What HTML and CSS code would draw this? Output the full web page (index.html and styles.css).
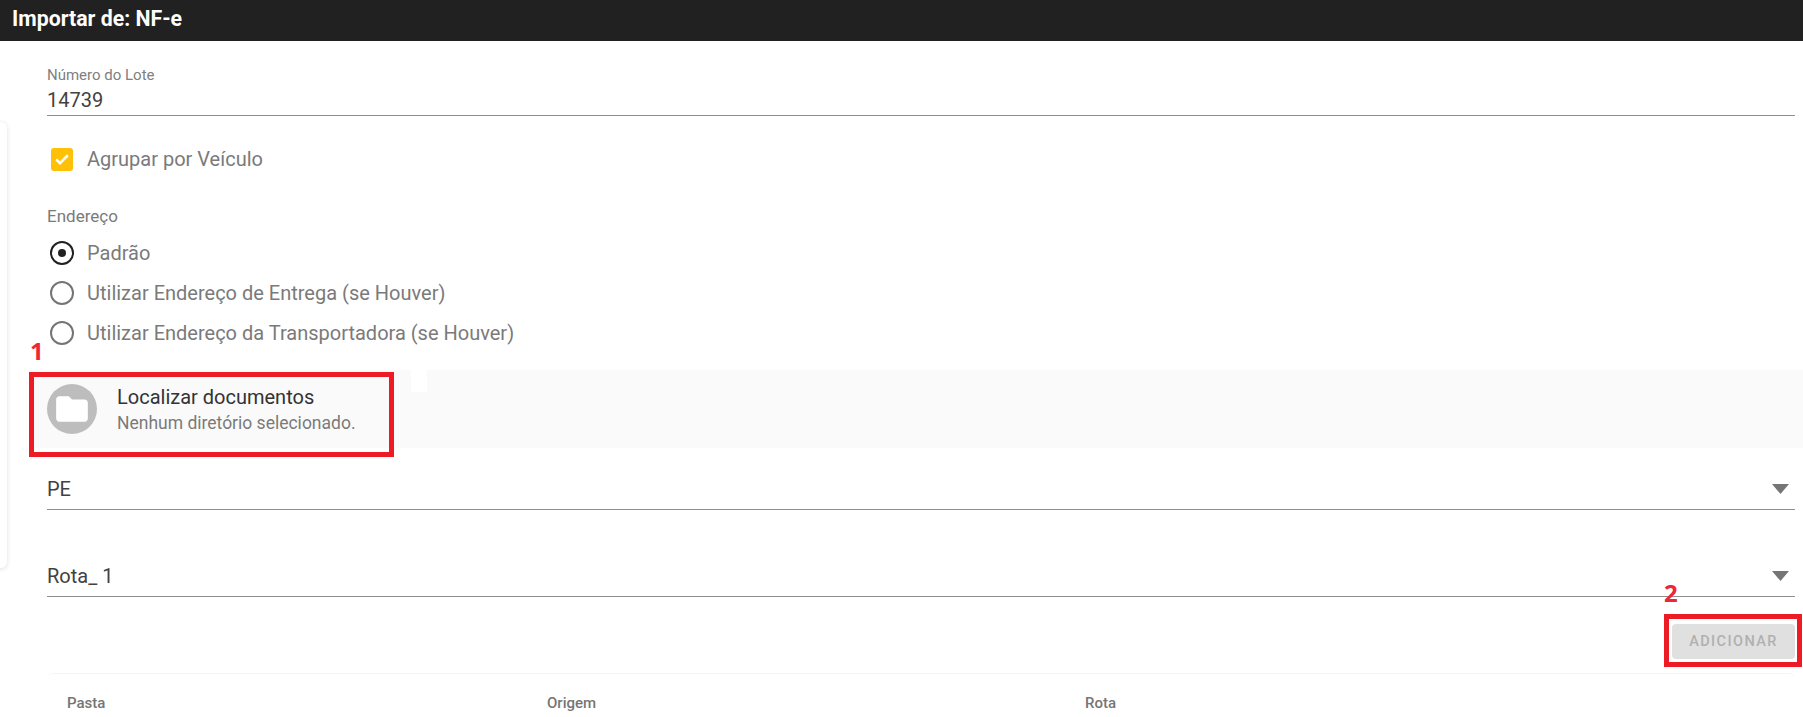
FILE: index.html
```html
<!DOCTYPE html>
<html lang="pt-BR">
<head>
<meta charset="utf-8">
<title>Importar de: NF-e</title>
<link rel="stylesheet" href="styles.css">
</head>
<body>
<header class="topbar">Importar de: NF-e</header>
<div class="side-card"></div>
<main class="content">
  <div class="field lote">
    <label class="field-label">Número do Lote</label>
    <div class="field-value">14739</div>
  </div>
  <div class="check-row">
    <span class="checkbox">
      <svg viewBox="0 0 24 24" width="20" height="20"><path d="M5 12.500l4.600 4.500L19 7.500" fill="none" stroke="#fff" stroke-width="3"/></svg>
    </span>
    <span class="option-text">Agrupar por Veículo</span>
  </div>
  <div class="group-label">Endereço</div>
  <div class="radio-group">
    <div class="radio-row"><span class="radio selected"></span><span class="option-text">Padrão</span></div>
    <div class="radio-row"><span class="radio"></span><span class="option-text">Utilizar Endereço de Entrega (se Houver)</span></div>
    <div class="radio-row"><span class="radio"></span><span class="option-text">Utilizar Endereço da Transportadora (se Houver)</span></div>
  </div>
  <section class="locate">
    <span class="folder-circle">
      <svg viewBox="0 0 24 24" width="38" height="38"><path d="M10 4H4c-1.100 0-2 .9-2 2v12c0 1.100.9 2 2 2h16c1.100 0 2-.9 2-2V8c0-1.100-.9-2-2-2h-8l-2-2z" fill="#fff"/></svg>
    </span>
    <div class="locate-text">
      <div class="locate-title">Localizar documentos</div>
      <div class="locate-sub">Nenhum diretório selecionado.</div>
    </div>
    <span class="notch"></span>
  </section>
  <div class="select first">
    <span>PE</span>
    <svg class="arrow" viewBox="0 0 17 10" width="17" height="10"><path d="M0 0h17L8.500 10z" fill="#757575"/></svg>
  </div>
  <div class="select second">
    <span>Rota_ 1</span>
    <svg class="arrow" viewBox="0 0 17 10" width="17" height="10"><path d="M0 0h17L8.500 10z" fill="#757575"/></svg>
  </div>
  <div class="actions"><button class="add-btn" disabled>ADICIONAR</button></div>
  <div class="table-card">
    <div class="col col-pasta">Pasta</div>
    <div class="col col-origem">Origem</div>
    <div class="col col-rota">Rota</div>
  </div>
</main>
<div class="mark mark-one">1</div>
<div class="frame frame-one"></div>
<div class="mark mark-two">2</div>
<div class="frame frame-two"></div>
</body>
</html>
```

FILE: styles.css
```css
* { box-sizing: border-box; }
html, body { margin: 0; height: 717px; overflow: hidden; background: #fff; }
body { position: relative; font-family: Roboto, "Liberation Sans", sans-serif; color: #212121; }

.topbar { height: 41px; background: #212121; color: #fff; font-size: 21.300px; font-weight: 700; line-height: 38px; padding-left: 12px; }

.side-card { position: absolute; left: -10px; top: 122px; width: 17px; height: 446px; background: #fff; border-radius: 6px; box-shadow: 0 1px 5px rgba(0,0,0,.13); }

.content { padding-left: 29px; display: flex; flex-direction: column; }

.field { margin: 0 8px 0 18px; }
.lote { height: 75px; padding-top: 25px; border-bottom: 1px solid #8e8e8e; }
.field-label { display: block; font-size: 15px; line-height: 18px; color: #808080; }
.field-value { font-size: 20px; line-height: 24px; color: #424242; margin-top: 4px; }

.check-row { display: flex; align-items: center; height: 24px; margin: 31px 0 0 22px; }
.checkbox { width: 22px; height: 23px; border-radius: 3px; background: #ffc107; display: flex; align-items: center; justify-content: center; margin-right: 14px; }
.option-text { font-size: 20px; color: #7a7a7a; line-height: 24px; }

.group-label { margin: 34px 0 0 18px; font-size: 17px; line-height: 22px; color: #7a7a7a; }

.radio-group { margin: 14px 0 0 21px; display: flex; flex-direction: column; gap: 16px; }
.radio-row { display: flex; align-items: center; height: 24px; }
.radio { width: 24px; height: 24px; border-radius: 50%; border: 2px solid #757575; margin-right: 13px; position: relative; flex: none; }
.radio.selected { border-color: #212121; }
.radio.selected::after { content: ""; position: absolute; inset: 6px; border-radius: 50%; background: #212121; }

.locate { position: relative; margin-top: 25px; height: 78px; background: #fafafa; display: flex; align-items: center; padding-left: 18px; }
.folder-circle { width: 50px; height: 50px; border-radius: 50%; background: #bdbdbd; display: flex; align-items: center; justify-content: center; margin-right: 20px; flex: none; }
.locate-text { margin-top: 2px; }
.locate-title { font-size: 20px; line-height: 26px; color: #333; }
.locate-sub { font-size: 17.500px; line-height: 26px; color: #7a7a7a; }
.notch { position: absolute; left: 382px; top: 0; width: 16px; height: 22px; background: #fff; }

.select { display: flex; align-items: center; justify-content: space-between; margin: 0 8px 0 18px; border-bottom: 1px solid #8e8e8e; font-size: 20px; height: 46px; padding: 4px 6px 0 0; color: #424242; }
.select.first { margin-top: 16px; }
.select.second { margin-top: 41px; }

.actions { display: flex; justify-content: flex-end; margin: 27px 8px 0 0; }
.add-btn { width: 123px; height: 35px; border: 0; border-radius: 4px; background: #e0e0e0; color: #b0b0b0; font-family: inherit; font-size: 14.500px; font-weight: 500; letter-spacing: 1.400px; padding: 0; }

.table-card { position: relative; margin: 14px 8px 0 18px; height: 60px; border-top: 1px solid #f4f4f4; border-radius: 6px 6px 0 0; display: grid; grid-template-columns: 480px 538px 1fr; padding: 20px 0 0 20px; align-content: start; }
.col { font-size: 15px; font-weight: 500; color: #757575; line-height: 18px; }

.mark { position: absolute; font-family: "Open Sans", sans-serif; font-weight: 700; font-size: 24px; line-height: 24px; color: #ee2737; }
.mark-one { left: 30px; top: 339px; }
.mark-two { left: 1664px; top: 581px; }
.frame { position: absolute; border: 5px solid #ed1c24; }
.frame-one { left: 29px; top: 372px; width: 365px; height: 85px; }
.frame-two { left: 1664px; top: 614px; width: 138px; height: 53px; }
```
